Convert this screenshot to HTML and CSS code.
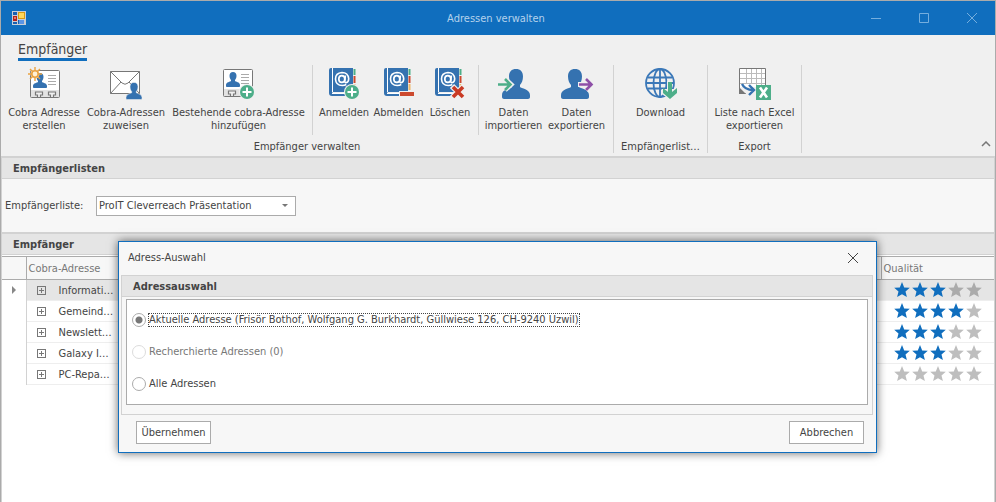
FILE: index.html
```html
<!DOCTYPE html>
<html lang="de">
<head>
<meta charset="utf-8">
<title>Adressen verwalten</title>
<link rel="stylesheet" href="styles.css">
</head>
<body>
<svg width="0" height="0" class="defs" aria-hidden="true">
  <defs>
    <symbol id="star" viewBox="0 0 18 18"><path d="M9 1l2.200 5.400 5.600.4-4.300 3.700 1.400 5.600L9 13.200l-4.900 2.900 1.400-5.600L1.200 6.800l5.600-.4z"/></symbol>
    <symbol id="person" viewBox="0 0 28 30"><path d="M14 0c4.400 0 7 2.600 7 7.500 0 4-1.500 7-3 8.500v2c1 1.500 10 2 10 8v2c0 1.200-1 2-2 2H2c-1 0-2-.8-2-2v-2c0-6 9-6.500 10-8v-2C8.500 14.500 7 11.500 7 7.500 7 2.600 9.600 0 14 0z"/></symbol>
    <symbol id="plus" viewBox="0 0 14 14"><circle cx="7" cy="7" r="7" fill="#4dae89"/><path d="M7 2.500v9M2.500 7h9" stroke="#fff" stroke-width="2"/></symbol>
    <symbol id="card" viewBox="0 0 30 28"><path d="M.5 1.500q0-1 1-1h27q1 0 1 1v25q0 1-1 1h-27q-1 0-1-1z" fill="#fff" stroke="#777"/><path d="M1 20h28v7H1z" fill="#e3e3e3"/><path d="M7.500 27v-2h-2v-3h7v3h-2v2M20.500 27v-2h-2v-3h7v3h-2v2" fill="#f0f0f0" stroke="#777" stroke-width="1.200"/><path d="M18 5.500h8M18 8.500h8M18 11.500h8M18 14.500h8" stroke="#aaa"/><use href="#person" x="3" y="3" width="14" height="15" fill="#3572b0"/></symbol>
    <symbol id="book" viewBox="0 0 30 30"><path d="M2 0h22v24H4v2h20v2H3q-3 0-3-3V2q0-2 2-2z" fill="#3572b0"/><path d="M3.500 0v24.500M3 25.500h20" stroke="#fff"/><path d="M24.500 1h2v6h-2z" fill="#4dae89"/><path d="M24.500 8h2v7h-2z" fill="#cc4a2f"/><path d="M24.500 16h2v6h-2z" fill="#efb766"/><ellipse cx="12.800" cy="11" rx="3" ry="3.400" fill="none" stroke="#fff" stroke-width="1.700"/><path d="M16.400 7.500l-.6 5.500q-.2 1.700 1.200 1.700 2.700-.5 2.700-4Q19 4.500 13 4.500 6.500 5 6.500 11q.3 6.500 6.800 6.500 2.200 0 4-1" fill="none" stroke="#fff" stroke-width="1.600"/></symbol>
  </defs>
</svg>
<div class="window">
  <header class="titlebar">
    <svg class="app-icon" viewBox="0 0 14 14"><path d="M0 0h14v14H0z" fill="#c9ced6"/><path d="M1 1h4v3H1zM1 11h4v2H1zM6 9h2v4H6z" fill="#1a5fb0"/><path d="M1 5h4v5H1z" fill="#b3211c"/><path d="M2 6h2v2H2z" fill="#e77a68"/><path d="M6 1h7v7H6z" fill="#d99a12"/><path d="M7 2h5v5H7z" fill="#ffd75c"/><path d="M7 9h5v4H7z" fill="#5b95e5"/></svg>
    <h1>Adressen verwalten</h1>
    <div class="caption-buttons">
      <button aria-label="Minimieren"><svg viewBox="0 0 12 12"><path d="M1 6.500h10"/></svg></button>
      <button aria-label="Maximieren"><svg viewBox="0 0 12 12"><path d="M1.500 1.500h9v9h-9z"/></svg></button>
      <button aria-label="Schließen"><svg viewBox="0 0 12 12"><path d="M1 1l10 10M11 1L1 11"/></svg></button>
    </div>
  </header>

  <nav class="ribbon">
    <a class="tab" href="#">Empfänger</a>
    <div class="groups">
      <section class="group">
        <div class="items manage">
          <button class="item"><svg viewBox="0 0 32 32"><use href="#card" x="2" y="3" width="30" height="28"/><circle cx="7" cy="7" r="4.500" fill="#f0f0f0"/><path d="M7 0v14M0 7h14M2 2l10 10M12 2L2 12" stroke="#eaa240" stroke-width="1.400"/><circle cx="7" cy="7" r="3.200" fill="#fff1d6" stroke="#eaa240" stroke-width="1.600"/></svg><span>Cobra Adresse<br>erstellen</span></button>
          <button class="item"><svg viewBox="0 0 32 32"><path d="M.5 4.500h29v22H.5z" fill="#fff" stroke="#777"/><path d="M.5 4.500L12 16q3 2.500 6 0L29.500 4.500M.5 26.500L11 15M29.500 26.500L19 15" fill="none" stroke="#777"/><use href="#person" x="16" y="15" width="16" height="18" fill="#3572b0" stroke="#f0f0f0"/></svg><span>Cobra-Adressen<br>zuweisen</span></button>
          <button class="item"><svg viewBox="0 0 32 32"><use href="#card" x="0" y="2" width="30" height="28"/><circle cx="24" cy="25" r="8" fill="#f0f0f0"/><use href="#plus" x="17" y="18" width="14" height="14"/></svg><span>Bestehende cobra-Adresse<br>hinzufügen</span></button>
          <i class="rule"></i>
          <button class="item"><svg viewBox="0 0 32 32"><use href="#book" x="1" y="1" width="30" height="30"/><circle cx="24" cy="25" r="8" fill="#f0f0f0"/><use href="#plus" x="17" y="18" width="14" height="14"/></svg><span>Anmelden</span></button>
          <button class="item"><svg viewBox="0 0 32 32"><use href="#book" x="1" y="1" width="30" height="30"/><path d="M16 24h16v6H16z" fill="#f0f0f0"/><path d="M17 25h14v4H17z" fill="#cc4a2f"/></svg><span>Abmelden</span></button>
          <button class="item"><svg viewBox="0 0 32 32"><use href="#book" x="1" y="1" width="30" height="30"/><path d="M18 19l12 12M30 19L18 31" stroke="#f0f0f0" stroke-width="6"/><path d="M19 20l10 10M29 20L19 30" stroke="#c93a24" stroke-width="3.600"/></svg><span>Löschen</span></button>
          <i class="rule"></i>
          <button class="item"><svg viewBox="0 0 32 32"><use href="#person" x="4" y="2" width="28" height="30" fill="#3572b0"/><path d="M0 17.500h12M7 12l6 5.500L7 23" fill="none" stroke="#f0f0f0" stroke-width="5"/><path d="M0 17.500h12M7 12l5.500 5.500L7 23" fill="none" stroke="#4dae89" stroke-width="2.600"/></svg><span>Daten<br>importieren</span></button>
          <button class="item"><svg viewBox="0 0 32 32"><use href="#person" x="0" y="2" width="28" height="30" fill="#3572b0"/><path d="M17 17.500h13M25 12l6 5.500-6 5.500" fill="none" stroke="#f0f0f0" stroke-width="5"/><path d="M18 17.500h12M25 12l5.500 5.500L25 23" fill="none" stroke="#8e50a8" stroke-width="2.600"/></svg><span>Daten<br>exportieren</span></button>
        </div>
        <h2>Empfänger verwalten</h2>
      </section>
      <section class="group small">
        <div class="items">
          <button class="item"><svg viewBox="0 0 32 32"><g fill="none" stroke="#3b78b8" stroke-width="1.800"><circle cx="15" cy="16" r="14"/><ellipse cx="15" cy="16" rx="6.500" ry="14"/><path d="M15 2v28M1 16h28M3 10.500h24M3 21.500h24"/></g><path d="M22 14h5v8h6v5l-8 6-8-6v-5h5z" fill="#f0f0f0"/><path d="M23 15h4v10l5-4v5l-7 6-7-6v-5l5 4z" fill="#4dae89"/></svg><span>Download</span></button>
        </div>
        <h2>Empfängerlist…</h2>
      </section>
      <section class="group small">
        <div class="items">
          <button class="item"><svg viewBox="0 0 32 32"><path d="M.5 1.500h26v25H.5z" fill="#fff" stroke="#777"/><path d="M1 6.500h25M1 11.500h25M1 16.500h25M7.500 2v14M12.500 2v14M17.500 2v17M22.500 2v17" stroke="#bbb"/><path d="M10 20h17v7H7l-6-7z" fill="#f0f0f0"/><path d="M0 20v7h7z" fill="#777"/><path d="M3 17q3 6 11 6M10 18l5 5-5 5" fill="none" stroke="#3572b0" stroke-width="2.400"/><path d="M17 18h15v15H17z" fill="#4dae89"/><path d="M21 20.500l7 10M28 20.500l-7 10" stroke="#fff" stroke-width="2.600"/></svg><span>Liste nach Excel<br>exportieren</span></button>
        </div>
        <h2>Export</h2>
      </section>
      <button class="collapse" aria-label="Menüband reduzieren"><svg viewBox="0 0 10 6"><path d="M1 5l4-4 4 4"/></svg></button>
    </div>
  </nav>

  <section class="panel">
    <h2 class="panel-title">Empfängerlisten</h2>
    <div class="filter">
      <label for="liste">Empfängerliste:</label>
      <select id="liste"><option>ProIT Cleverreach Präsentation</option></select>
    </div>
  </section>

  <section class="panel grid-panel">
    <h2 class="panel-title">Empfänger</h2>
    <table>
      <thead><tr><th class="mark"></th><th class="name">Cobra-Adresse</th><th class="rest"></th><th class="quality">Qualität</th></tr></thead>
      <tbody>
        <tr class="current"><td class="mark"><svg viewBox="0 0 4 8"><path d="M0 0l4 4-4 4z"/></svg></td><td class="name"><button aria-label="Aufklappen"></button>Informati…</td><td></td><td class="quality"><span class="stars r3"><svg><use href="#star"/></svg><svg><use href="#star"/></svg><svg><use href="#star"/></svg><svg><use href="#star"/></svg><svg><use href="#star"/></svg></span></td></tr>
        <tr><td class="mark"></td><td class="name"><button aria-label="Aufklappen"></button>Gemeind…</td><td></td><td class="quality"><span class="stars r4"><svg><use href="#star"/></svg><svg><use href="#star"/></svg><svg><use href="#star"/></svg><svg><use href="#star"/></svg><svg><use href="#star"/></svg></span></td></tr>
        <tr><td class="mark"></td><td class="name"><button aria-label="Aufklappen"></button>Newslett…</td><td></td><td class="quality"><span class="stars r3"><svg><use href="#star"/></svg><svg><use href="#star"/></svg><svg><use href="#star"/></svg><svg><use href="#star"/></svg><svg><use href="#star"/></svg></span></td></tr>
        <tr><td class="mark"></td><td class="name"><button aria-label="Aufklappen"></button>Galaxy I…</td><td></td><td class="quality"><span class="stars r3"><svg><use href="#star"/></svg><svg><use href="#star"/></svg><svg><use href="#star"/></svg><svg><use href="#star"/></svg><svg><use href="#star"/></svg></span></td></tr>
        <tr><td class="mark"></td><td class="name"><button aria-label="Aufklappen"></button>PC-Repa…</td><td></td><td class="quality"><span class="stars"><svg><use href="#star"/></svg><svg><use href="#star"/></svg><svg><use href="#star"/></svg><svg><use href="#star"/></svg><svg><use href="#star"/></svg></span></td></tr>
      </tbody>
    </table>
  </section>
</div>

<div class="dialog" role="dialog" aria-labelledby="dlg-title">
  <header><h2 id="dlg-title">Adress-Auswahl</h2><button aria-label="Schließen"><svg viewBox="0 0 12 12"><path d="M1 1l10 10M11 1L1 11"/></svg></button></header>
  <div class="box">
    <h3 class="panel-title">Adressauswahl</h3>
    <div class="options">
      <label><input type="radio" name="auswahl" checked><span class="focused">Aktuelle Adresse (Frisör Bothof, Wolfgang G. Burkhardt, Güllwiese 126, CH-9240 Uzwil)</span></label>
      <label class="off"><input type="radio" name="auswahl" disabled><span>Recherchierte Adressen (0)</span></label>
      <label><input type="radio" name="auswahl"><span>Alle Adressen</span></label>
    </div>
  </div>
  <footer><button>Übernehmen</button><button>Abbrechen</button></footer>
</div>
</body>
</html>
```
FILE: styles.css
```css
* { box-sizing: border-box; }
body, h1, h2, h3 { margin: 0; font-size: 11px; font-weight: normal; }
body, button, select { font-family: "DejaVu Sans Condensed", "Noto Sans", sans-serif; font-size: 11px; color: #444; }
body { line-height: 13px; background: #fff; }
button { padding: 0; border: 0; background: none; line-height: 13px; }
.defs { position: absolute; }

.window { display: flex; flex-direction: column; min-height: 100vh; border: solid #ababab; border-width: 1px 1px 0; }

.titlebar { display: grid; grid-template-columns: 1fr auto 1fr; align-items: center; height: 34px; padding: 0 9px 0 5px; background: #106ebe; }
.titlebar h1 { color: #b4d2ec; }
.app-icon { width: 14px; height: 14px; margin-left: 6px; }
.caption-buttons { display: flex; justify-content: flex-end; gap: 20px; }
.caption-buttons button { width: 28px; height: 28px; }
.caption-buttons svg { display: block; width: 12px; height: 12px; margin: auto; fill: none; stroke: #75aede; }

.ribbon { padding-top: 5px; border-bottom: 2px solid #d2d2d2; background: #f0f0f0; }
.tab { display: inline-block; margin-left: 17px; height: 21px; border-bottom: 3px solid #106ebe; font-size: 14px; line-height: 18px; color: #444; text-decoration: none; }
.groups { display: flex; height: 95px; }
.group { display: flex; flex-direction: column; height: 88px; margin-top: 4px; padding: 0 4px; border-right: 1px solid #d2d2d2; }
.small { width: 94px; }
.items { display: grid; height: 70px; }
.manage { grid-template-columns: 78px 86px 139px 9px 54px 55px 48px 9px 61px 65px; }
.item { display: flex; flex-direction: column; align-items: center; padding-top: 2px; white-space: nowrap; }
.item svg { flex: none; width: 32px; height: 32px; margin-bottom: 7px; overflow: visible; }
.item span { display: flex; flex-direction: column; align-items: center; }
.item span { display: block; margin: 0 -8px; }
.rule { width: 1px; margin: 0 auto; background: #d2d2d2; }
.group h2 { margin-top: 5px; text-align: center; white-space: nowrap; }
.collapse { margin: auto 4px 9px auto; }
.collapse svg { display: block; width: 10px; height: 6px; fill: none; stroke: #777; stroke-width: 1.5; }

.panel { border: solid #d2d2d2; border-width: 0 1px; background: #f7f7f7; }
.panel-title { height: 21px; padding-left: 11px; border-bottom: 1px solid #d2d2d2; background: #e5e5e5; line-height: 21px; font-weight: bold; }
.filter { display: flex; align-items: center; height: 53px; padding-left: 3px; }
.filter label { width: 91px; }
.filter::after { content: ""; width: 0; margin-left: -14px; border: 3px solid transparent; border-top-color: #777; border-bottom: 0; pointer-events: none; }
select { appearance: none; width: 200px; height: 20px; padding: 0 2px; border: 1px solid #ababab; border-radius: 0; background: #fff; }

.grid-panel { flex: 1; border-top: 2px solid #d2d2d2; background: #fff; }
table { width: 100%; margin-top: 1px; border-collapse: collapse; table-layout: fixed; border-top: 1px solid #ababab; }
th { height: 23px; padding: 0 2px; border-bottom: 1px solid #ababab; background: #f7f7f7; text-align: left; font-weight: normal; color: #777; }
td { height: 21px; padding: 0; border-bottom: 1px solid #eee; white-space: nowrap; }
.mark { width: 24px; border-right: 1px solid #ababab; }
td.mark { border-right-color: #d2d2d2; border-bottom: 0; }
.mark svg { display: block; width: 4px; height: 8px; margin: auto; fill: #888; }
.name { width: 150px; }
.quality { width: 113px; }
th.quality { border-left: 1px solid #ababab; }
td.name button { width: 9px; height: 9px; margin: 0 13px 0 10px; border: 1px solid #777; vertical-align: middle; background: linear-gradient(#777, #777) center / 5px 1px no-repeat, linear-gradient(#777, #777) center / 1px 5px no-repeat; }
.current td:not(.mark) { background: #e5e5e5; }
.stars { display: flex; padding-left: 12px; }
.stars svg { width: 18px; height: 18px; fill: #bebebe; }
.current .stars svg { fill: #ababab; }
.r3 svg:nth-child(-n+3), .r4 svg:nth-child(-n+4), .current .r3 svg:nth-child(-n+3) { fill: #106ebe; }

.dialog { position: absolute; top: 241px; left: 118px; right: 119px; padding: 0 3px 8px 2px; border: 1px solid #106ebe; background: #f7f7f7; box-shadow: 0 0 9px rgba(0, 0, 0, .6); }
.dialog header { display: flex; align-items: center; justify-content: space-between; height: 33px; padding: 0 14px 2px 7px; }
.dialog header svg { display: block; width: 12px; height: 12px; fill: none; stroke: #444; }
.box { padding-bottom: 9px; border: 1px solid #d2d2d2; }
.options { display: flex; flex-direction: column; gap: 18px; margin: 2px 4px 0; padding: 13px 5px; border: 1px solid #ababab; background: #fff; }
.options label { display: flex; align-items: center; gap: 2px; height: 14px; }
.options input { appearance: none; width: 14px; height: 14px; margin: 0; border: 1px solid #ababab; border-radius: 50%; background: #fff; }
.options input:checked { background: radial-gradient(circle, #777 3px, #fff 4px); }
.options input:disabled { border-color: #dcdcdc; }
.options span { border: 1px solid transparent; line-height: 12px; }
.options .focused { border: 1px dotted #444; }
.off { color: #777; }
.dialog footer { display: flex; justify-content: space-between; padding: 6px 9px 0 15px; }
.dialog footer button { width: 75px; height: 23px; border: 1px solid #ababab; background: #fff; }
```
